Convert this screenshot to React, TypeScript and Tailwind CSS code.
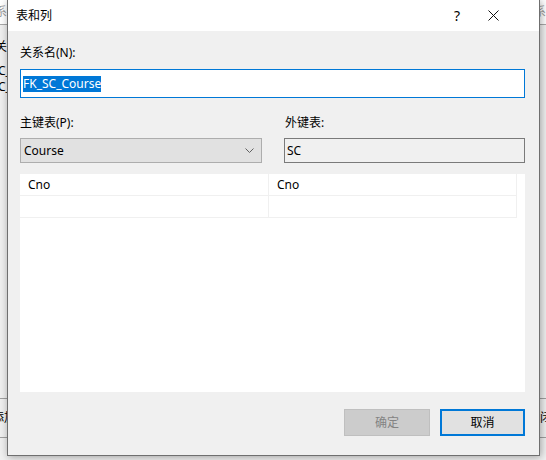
export default function App() {
  return (
    <div className="relative h-[460px] w-[546px] overflow-hidden bg-[#f0f0f0] font-['Noto_Sans','Noto_Sans_CJK_SC',sans-serif] text-[12px] text-black">
      {/* background window behind the dialog */}
      <div className="flex h-full flex-col">
        <div className="flex h-[25px] items-center justify-between border-b border-[#a8a8a8] bg-white text-[#9a9a9a]">
          <span className="-ml-[5px]">系</span>
          <span>系</span>
        </div>
        <div className="flex flex-col pt-[14px] leading-[16px]">
          <span className="-ml-[5px]">关</span>
          <span className="-ml-[2px] mt-[8px]">C_</span>
          <span className="-ml-[2px]">C_</span>
        </div>
        <div className="mt-auto mb-[22px] flex h-[40px] items-center justify-between border-y border-[#a0a0a0]">
          <span className="-ml-[8px]">添加</span>
          <span className="-mr-[6px]">关闭</span>
        </div>
      </div>

      {/* dialog */}
      <div className="absolute left-[7px] top-0 flex h-[456px] w-[533px] flex-col border-x border-b border-[#6f6f6f] bg-[#f0f0f0] shadow-[1px_1px_8px_rgba(0,0,0,0.35)]">
        <div className="flex h-[31px] shrink-0 items-center bg-white pl-[8px] pr-[36px]">
          <span>表和列</span>
          <span className="ml-auto w-[20px] text-center text-[14px] leading-none">?</span>
          <span className="ml-[16px] flex w-[20px] justify-center">
            <svg width="11" height="11" viewBox="0 0 11 11" fill="none" stroke="#111" strokeWidth="1">
              <path d="M0.5 0.5L10.5 10.5M10.5 0.5L0.5 10.5" />
            </svg>
          </span>
        </div>

        <div className="flex flex-1 flex-col pl-[12px] pr-[14px] pt-[14px] leading-[16px]">
          <div className="h-[16px]">关系名(N):</div>
          <div className="mt-[8px] flex h-[29px] items-center border border-[#0078d7] bg-white pl-[2px]">
            <span className="bg-[#0078d7] text-white">FK_SC_Course</span>
          </div>

          <div className="mt-[17px] grid grid-cols-[242px_1fr] gap-x-[22px]">
            <div className="h-[16px]">主键表(P):</div>
            <div className="h-[16px] pl-[1px]">外键表:</div>
            <div className="mt-[7px] flex h-[25px] items-center border border-[#adadad] bg-[#e1e1e1] pl-[3px] pr-[7px]">
              <span>Course</span>
              <svg className="ml-auto" width="9" height="5" viewBox="0 0 9 5" fill="none" stroke="#606060" strokeWidth="1">
                <path d="M0.5 0.5L4.5 4.5L8.5 0.5" />
              </svg>
            </div>
            <div className="mt-[7px] flex h-[25px] items-center border border-[#7a7a7a] bg-[#f0f0f0] pl-[2px]">
              SC
            </div>
          </div>

          <div className="mt-[11px] h-[218px] bg-white">
            <div className="flex w-[497px] flex-col">
              {[["Cno", "Cno"], ["", ""]].map((row, i) => (
                <div key={i} className="flex h-[22px] border-b border-[#f0f0f0]">
                  <div className="flex w-[249px] items-center border-r border-[#f0f0f0] pl-[8px]">{row[0]}</div>
                  <div className="flex w-[248px] items-center border-r border-[#f0f0f0] pl-[8px]">{row[1]}</div>
                </div>
              ))}
            </div>
          </div>

          <div className="mt-[17px] flex justify-end gap-[10px]">
            <button className="h-[27px] w-[86px] border border-[#bfbfbf] bg-[#cccccc] text-[#838383]">确定</button>
            <button className="h-[27px] w-[85px] border-2 border-[#0078d7] bg-[#e1e1e1]">取消</button>
          </div>
        </div>
      </div>
    </div>
  );
}
